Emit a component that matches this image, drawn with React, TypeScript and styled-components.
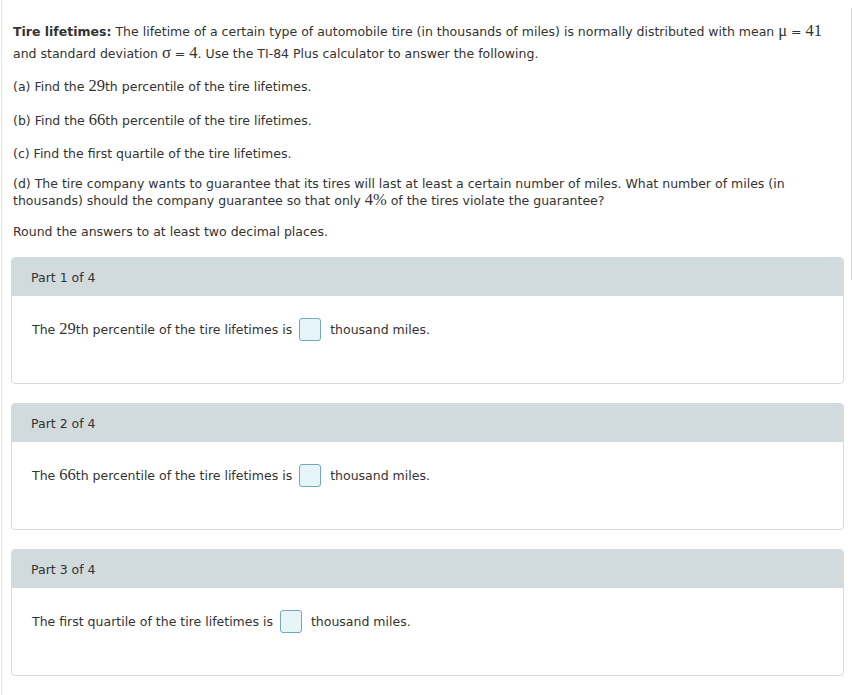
import React from "react";
import styled, { createGlobalStyle } from "styled-components";

const GlobalStyle = createGlobalStyle`
  html, body {
    margin: 0;
    padding: 0;
    background: #ffffff;
  }
  body {
    font-family: "DejaVu Sans", Verdana, sans-serif;
    font-size: 12.5px;
    color: #333333;
  }
`;

const Page = styled.div`
  display: flex;
  align-items: flex-start;
  width: 852px;
  height: 695px;
  overflow: hidden;
  box-sizing: border-box;
  border-left: 1px solid #e3e3e3;
  margin-left: 1px;
`;

const Content = styled.div`
  width: 833px;
  padding: 21px 0 0 9px;
  box-sizing: content-box;
`;

const RightRail = styled.div`
  width: 0;
  height: 272px;
  margin: 8px 0 0 7px;
  border-left: 1px solid #d3d8db;
`;

const Question = styled.div`
  display: flex;
  flex-direction: column;
  padding-left: 2px;
`;

const Para = styled.p<{ $lh?: number; $mt?: number }>`
  margin: ${(p) => p.$mt ?? 0}px 0 0;
  line-height: ${(p) => p.$lh ?? 20}px;
`;

const Strong = styled.b`
  font-weight: bold;
`;

const M = styled.span`
  font-family: "Liberation Serif", "Times New Roman", serif;
  font-size: 16.5px;
  line-height: 1;
`;

const Parts = styled.div`
  display: flex;
  flex-direction: column;
  gap: 19px;
  margin-top: 15px;
`;

const Card = styled.section`
  border: 1px solid #d3dbde;
  border-radius: 4px;
  overflow: hidden;
  background: #ffffff;
`;

const CardHeader = styled.div`
  height: 38px;
  display: flex;
  align-items: center;
  padding-left: 19px;
  background: #d1dadd;
`;

const CardBody = styled.div`
  height: 87px;
  padding: 22px 0 0 20px;
  box-sizing: border-box;
`;

const AnswerRow = styled.div`
  display: flex;
  align-items: center;
  height: 23px;
`;

const Label = styled.span`
  white-space: nowrap;
`;

const AnswerBox = styled.span`
  display: inline-block;
  width: 20px;
  height: 21px;
  margin: 0 9px 0 7px;
  border: 1px solid #6fa9bb;
  border-radius: 3px;
  background: #e7f4f8;
`;

const parts = [
  { n: 1, pre: <>The <M>29</M>th percentile of the tire lifetimes is</> },
  { n: 2, pre: <>The <M>66</M>th percentile of the tire lifetimes is</> },
  { n: 3, pre: <>The first quartile of the tire lifetimes is</> },
];

export default function App() {
  return (
    <>
      <GlobalStyle />
      <Page>
        <Content>
          <Question>
            <Para $lh={22}>
              <Strong>Tire lifetimes:</Strong> The lifetime of a certain type of
              automobile tire (in thousands of miles) is normally distributed with
              mean <M>μ</M> = <M>41</M> and standard deviation <M>σ</M> ={" "}
              <M>4</M>. Use the TI-84 Plus calculator to answer the following.
            </Para>
            <Para $mt={12}>
              (a) Find the <M>29</M>th percentile of the tire lifetimes.
            </Para>
            <Para $mt={14}>
              (b) Find the <M>66</M>th percentile of the tire lifetimes.
            </Para>
            <Para $mt={13}>(c) Find the first quartile of the tire lifetimes.</Para>
            <Para $lh={17} $mt={11}>
              (d) The tire company wants to guarantee that its tires will last at
              least a certain number of miles. What number of miles (in thousands)
              should the company guarantee so that only <M>4%</M> of the tires
              violate the guarantee?
            </Para>
            <Para $mt={13}>Round the answers to at least two decimal places.</Para>
          </Question>
          <Parts>
            {parts.map((p) => (
              <Card key={p.n}>
                <CardHeader>Part {p.n} of 4</CardHeader>
                <CardBody>
                  <AnswerRow>
                    <Label>{p.pre}</Label>
                    <AnswerBox />
                    <Label>thousand miles.</Label>
                  </AnswerRow>
                </CardBody>
              </Card>
            ))}
            <Card>
              <CardHeader>Part 4 of 4</CardHeader>
            </Card>
          </Parts>
        </Content>
        <RightRail />
      </Page>
    </>
  );
}
